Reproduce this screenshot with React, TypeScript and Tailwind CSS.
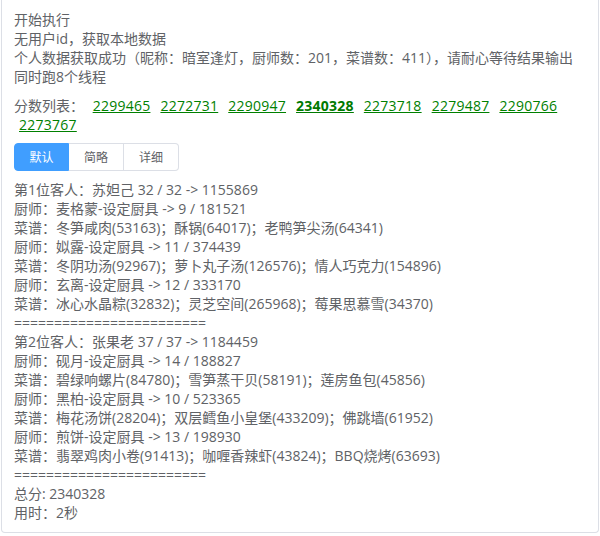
const scores = [
  { v: "2299465", best: false },
  { v: "2272731", best: false },
  { v: "2290947", best: false },
  { v: "2340328", best: true },
  { v: "2273718", best: false },
  { v: "2279487", best: false },
  { v: "2290766", best: false },
  { v: "2273767", best: false },
];

const modes = ["默认", "简略", "详细"];

const intro = [
  "开始执行",
  "无用户id，获取本地数据",
  "个人数据获取成功（昵称：暗室逢灯，厨师数：201，菜谱数：411），请耐心等待结果输出",
  "同时跑8个线程",
];

const sep = "========================";

const result = [
  "第1位客人：苏妲己 32 / 32 -> 1155869",
  "厨师：麦格蒙-设定厨具 -> 9 / 181521",
  "菜谱：冬笋咸肉(53163)；酥锅(64017)；老鸭笋尖汤(64341)",
  "厨师：姒露-设定厨具 -> 11 / 374439",
  "菜谱：冬阴功汤(92967)；萝卜丸子汤(126576)；情人巧克力(154896)",
  "厨师：玄离-设定厨具 -> 12 / 333170",
  "菜谱：冰心水晶粽(32832)；灵芝空间(265968)；莓果思慕雪(34370)",
  sep,
  "第2位客人：张果老 37 / 37 -> 1184459",
  "厨师：砚月-设定厨具 -> 14 / 188827",
  "菜谱：碧绿响螺片(84780)；雪笋蒸干贝(58191)；莲房鱼包(45856)",
  "厨师：黑柏-设定厨具 -> 10 / 523365",
  "菜谱：梅花汤饼(28204)；双层鳕鱼小皇堡(433209)；佛跳墙(61952)",
  "厨师：煎饼-设定厨具 -> 13 / 198930",
  "菜谱：翡翠鸡肉小卷(91413)；咖喱香辣虾(43824)；BBQ烧烤(63693)",
  sep,
  "总分: 2340328",
  "用时：2秒",
];

export default function App() {
  return (
    <div className="w-[600px] h-[536px] bg-white font-['Open_Sans','Noto_Sans_CJK_SC',sans-serif] text-[14px] leading-[19px] text-[#606266]">
      <div className="ml-px mr-[1px] h-[533px] border-x border-b border-[#dcdfe6] rounded-b-[4px] px-3 pt-[10px]">
        <div>
          {intro.map((line) => (
            <div key={line}>{line}</div>
          ))}
        </div>

        <div className="mt-[10px]">
          <span>分数列表： </span>
          {scores.map((s) => (
            <a
              key={s.v}
              className={
                s.best
                  ? "inline-block mx-[5px] tracking-[0.25px] underline font-bold text-[#007a00] cursor-pointer"
                  : "inline-block mx-[5px] tracking-[0.25px] underline text-[#008000] cursor-pointer"
              }
            >
              {s.v}
            </a>
          ))}
        </div>

        <div className="mt-[9px] flex w-fit">
          {modes.map((m, i) => (
            <button
              key={m}
              type="button"
              className={
                i === 0
                  ? "h-[28px] w-[55px] text-[12px] text-white bg-[#409eff] border border-[#409eff] rounded-l-[4px]"
                  : i === modes.length - 1
                    ? "h-[28px] w-[55px] text-[12px] text-[#606266] bg-white border border-[#dcdfe6] border-l-0 rounded-r-[4px]"
                    : "h-[28px] w-[55px] text-[12px] text-[#606266] bg-white border border-[#dcdfe6] border-l-0"
              }
            >
              {m}
            </button>
          ))}
        </div>

        <div className="mt-[9px]">
          {result.map((line, i) => (
            <div key={i}>{line}</div>
          ))}
        </div>
      </div>
    </div>
  );
}
